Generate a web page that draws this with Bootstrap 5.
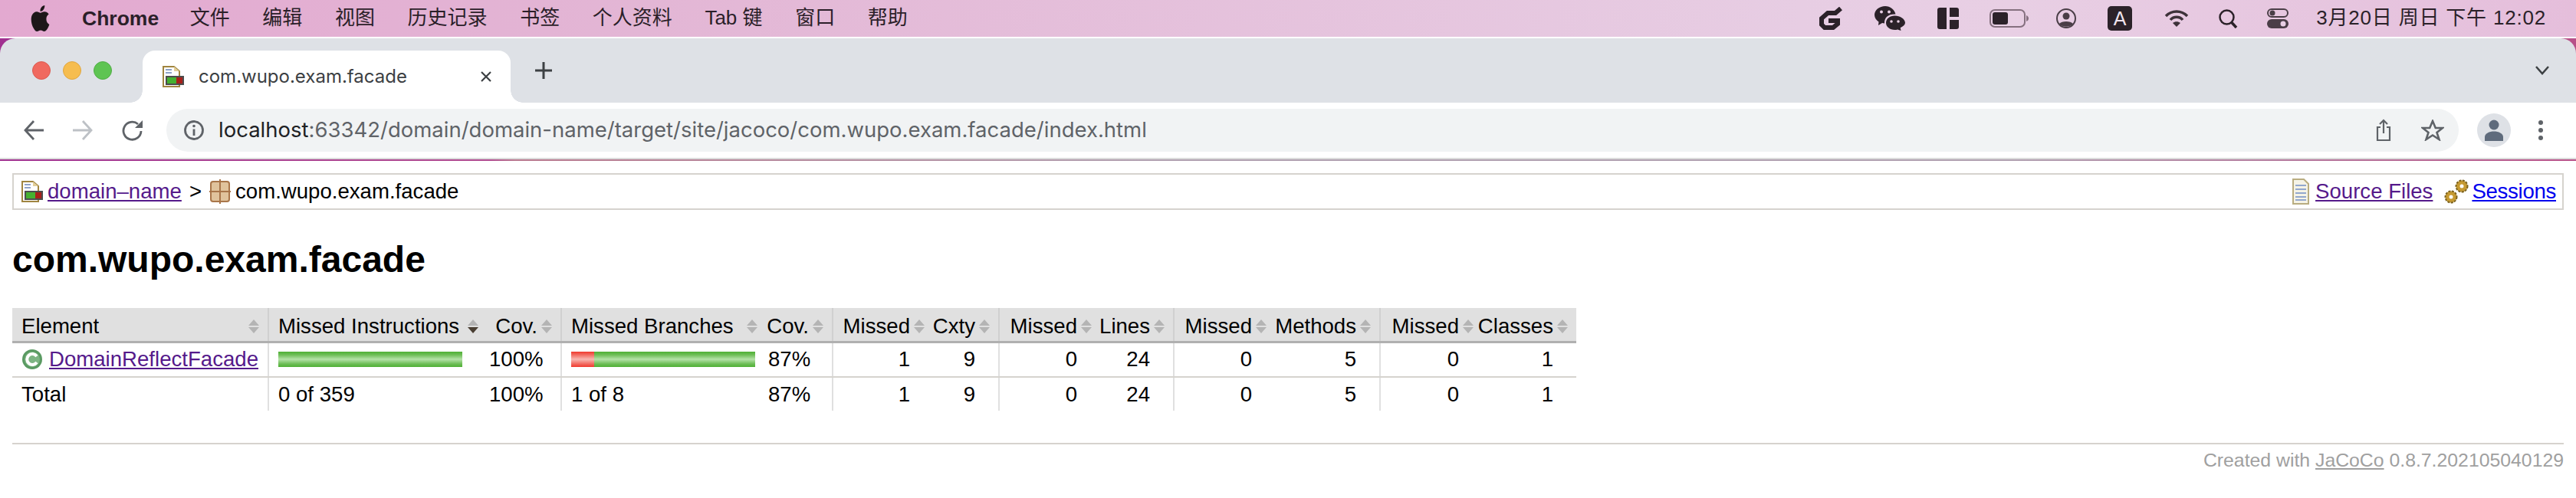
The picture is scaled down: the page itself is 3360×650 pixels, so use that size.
<!DOCTYPE html>
<html lang="en">
<head>
    <meta charset="UTF-8">
    <title>com.wupo.exam.facade</title>
    <link href="https://cdn.jsdelivr.net/npm/bootstrap@5.3.0/dist/css/bootstrap.min.css" rel="stylesheet">
    <style>
        html, body { height: 650px; overflow: hidden; }
        body { background: #fff; color: #000; font-family: "Liberation Sans", Arial, sans-serif; font-size: 27.6px; line-height: 1.15; }
        svg { display: block; flex: none; }

        .mac-bar { height: 48px; padding-left: 38px; padding-right: 39px; color: #2b1f29; font-family: "Liberation Sans", "Noto Sans CJK SC", sans-serif; font-size: 26px; background: linear-gradient(90deg, #e3a9d0 0%, #e3b6d5 25%, #e7cde3 70%, #e8cfe4 78%, #e5bedb 100%); }
        .mac-menu { gap: 42.6px; }
        .mac-menu b { font-size: 26.5px; margin-right: -2px; }
        .mac-apple { margin-right: -2.6px; }
        .mac-clock { letter-spacing: 0.8px; }
        .tray { color: #2b2229; }
        .g36 { margin-right: 36px; } .g38 { margin-right: 38px; } .g39 { margin-right: 39px; } .g40 { margin-right: 40px; } .g41 { margin-right: 41px; } .g42 { margin-right: 42px; }
        .wallpaper { height: 160px; background: linear-gradient(90deg, #a03090 0%, #b04a90 19%, #b8788e 20%, #b0a0b0 45%, #b0a0b0 78%, #b85088 100%); }
        .tabstrip { height: 84px; margin-top: 2px; padding-right: 35px; background: #dee1e6; border-radius: 20px 20px 0 0; }
        .lights { gap: 16px; padding-left: 42px; margin-right: 40px; }
        .light { width: 24px; height: 24px; border-radius: 50%; }
        .light-r { background: #f0695f; border: 1px solid #dc5a50; }
        .light-y { background: #f6bd4f; border: 1px solid #e0a640; }
        .light-g { background: #5ec452; border: 1px solid #50ad45; }
        .tab-head { position: relative; width: 480px; height: 68px; padding: 0 25px 0 26px; background: #fff; border-radius: 16px 16px 0 0; color: #3c4043; font-family: Inter, sans-serif; font-size: 24px; }
        .tab-head::before, .tab-head::after { content: ""; position: absolute; bottom: 0; width: 16px; height: 16px; }
        .tab-head::before { left: -16px; background: radial-gradient(circle at 0 0, #dee1e6 15.5px, #fff 16px); }
        .tab-head::after { right: -16px; background: radial-gradient(circle at 100% 0, #dee1e6 15.5px, #fff 16px); }
        .tab-title { margin-left: 19px; }
        .tab-plus { margin-left: 32px; }
        .toolbar { height: 74px; padding: 0 38px 0 31px; background: #fff; border-bottom: 2px solid #dcdcdc; }
        .tool-gap { margin-right: 38px; }
        .omnibox { height: 56px; width: 2990px; margin-left: -7px; margin-right: 24px; padding: 0 19px 0 23px; border-radius: 28px; background: #f1f3f4; color: #5f6368; font-family: Inter, sans-serif; font-size: 27.5px; }
        .omnibox em { font-style: normal; color: #202124; }
        .url-text { margin-left: 19px; }
        .star-ico { margin-left: 39px; }
        .avatar { width: 44px; height: 44px; border-radius: 50%; background: #dee1e6; margin-right: 36px; }

        .report { padding: 16px 16px 0; }
        .crumbs { height: 48px; padding: 0 8px 0 10px; border: 2px solid #d6d3ce; }
        .crumbs a { color: #551a8b; }
        .crumbs a.fresh { color: #0000ee; letter-spacing: -0.3px; }
        .crumb-link { margin-left: 6px; }
        .crumb-sep { margin: 0 10px; }
        .gear-ico { margin: 0 4px 0 15px; }
        .report-title { margin: 37px 0 0; font-family: "Liberation Sans", sans-serif; font-size: 48px; font-weight: 700; line-height: 55px; }
        .cov-table.table { width: 2040px; margin: 36px 0 0; table-layout: fixed; font-size: 27.6px; }
        .cov-table.table > thead > tr > th { height: 44px; padding: 0 10px 3px 12px; font-weight: 400; background: #e0e0e0; border-bottom: 3px solid #b0b0b0; color: #000; }
        .cov-table.table > thead > tr > th.tight { padding-right: 1px; }
        .cov-table.table > tbody > tr > td { height: 46px; padding: 0 30px 0 12px; vertical-align: middle; border-bottom: 2px solid #d6d3ce; text-align: right; color: #000; }
        .cov-table.table > tbody > tr > td.txt { padding-right: 0; text-align: left; }
        .cov-table.table > tbody > tr > td.tight { padding-right: 21px; }
        .cov-table.table > tbody:last-child > tr:last-child > td { border-bottom: 0; height: 44px; }
        .cov-table.table > thead > tr > .edge, .cov-table.table > tbody > tr > .edge { border-right: 2px solid #e0e0e0; }
        .cov-table.table > thead > tr > th.edge { border-right-color: #d0d0d0; }
        .cov-table a { color: #551a8b; }
        .sort-ico { color: #b4b4b4; margin-left: 4px; }
        .sort-on { color: #4a3f33; }
        .bar-green, .bar-red { height: 20px; }
        .bar-green { background: linear-gradient(180deg, #4fb035 0%, #6cbd55 20%, #b5e2a8 50%, #6cbd55 80%, #4fb035 100%); }
        .bar-red { background: linear-gradient(180deg, #f0392e 0%, #f26a60 20%, #f8b8b2 50%, #f26a60 80%, #f0392e 100%); }
        .report-foot { margin-top: 42px; border-top: 2px solid #d6d3ce; padding-top: 7px; color: #a0a0a0; font-size: 24.8px; text-align: right; }
        .report-foot a { color: #a0a0a0; }
    </style>
</head>
<body>
    <svg width="0" height="0" class="position-absolute">
        <defs>
            <symbol id="ico-report" viewBox="0 0 28 28">
                <path d="M1 1H15L22 7V27H1Z" fill="#fff" stroke="#a08540" stroke-width="2"/>
                <path d="M15 1V7H22Z" fill="#e3cf9a"/>
                <path d="M4 5H12M4 9H12" stroke="#8ea2c8" stroke-width="2"/>
                <rect x="4" y="13" width="24" height="12" fill="#4c4c4c"/>
                <rect x="6" y="15" width="12" height="8" fill="#45b030"/>
                <rect x="18" y="15" width="8" height="8" fill="#a8201a"/>
            </symbol>
        </defs>
    </svg>

    <div class="mac-bar d-flex align-items-center">
        <div class="mac-menu d-flex align-items-center">
            <svg class="mac-apple" width="29" height="34" viewBox="0 0 24 24" preserveAspectRatio="none" fill="#1d1719"><path d="M12.152 6.896c-.948 0-2.415-1.078-3.96-1.04-2.04.027-3.91 1.183-4.961 3.014-2.117 3.675-.546 9.103 1.519 12.09 1.013 1.454 2.208 3.09 3.792 3.039 1.52-.065 2.09-.987 3.935-.987 1.831 0 2.35.987 3.96.948 1.637-.026 2.676-1.48 3.676-2.948 1.156-1.688 1.636-3.325 1.662-3.415-.039-.013-3.182-1.221-3.22-4.857-.026-3.04 2.48-4.494 2.597-4.559-1.429-2.09-3.623-2.324-4.39-2.376-2-.156-3.675 1.09-4.61 1.09zM15.53 3.83c.843-1.012 1.4-2.427 1.245-3.83-1.207.052-2.662.805-3.532 1.818-.78.896-1.454 2.338-1.273 3.714 1.338.104 2.715-.688 3.559-1.701"/></svg>
            <b>Chrome</b>
            <span>文件</span>
            <span>编辑</span>
            <span>视图</span>
            <span>历史记录</span>
            <span>书签</span>
            <span>个人资料</span>
            <span>Tab 键</span>
            <span>窗口</span>
            <span>帮助</span>
        </div>
        <div class="tray d-flex align-items-center ms-auto">
            <svg class="g42" width="30" height="30" viewBox="0 0 30 30" fill="none" stroke="currentColor" stroke-width="6"><path d="M28 2L21 8H11L3 15V23L7 27H18L24 22V18H12"/></svg>
            <svg class="g42" width="40" height="32" viewBox="0 0 40 32" fill="currentColor"><path d="M14 0C6.500 0 0 5 0 11.500C0 15.500 2.500 18.500 5.500 20.500L5 25L10 22C11 22.300 12 22.500 13 22.500C12.500 15 18 10 27.500 10.500C26 4.500 20.500 0 14 0Z"/><path d="M26.500 12.500C20 12.500 15 16.700 15 21.800C15 27 20 31 26.500 31C28 31 29 30.800 30 30.400L34.500 32L33.700 28.300C37.500 26.500 40 24.300 40 21.800C40 16.700 33 12.500 26.500 12.500Z"/><circle cx="9" cy="7.500" r="2" fill="#e8cfe4"/><circle cx="19" cy="7.500" r="2" fill="#e8cfe4"/><circle cx="22" cy="20" r="1.800" fill="#e8cfe4"/><circle cx="31" cy="20" r="1.800" fill="#e8cfe4"/></svg>
            <svg class="g40" width="28" height="28" viewBox="0 0 28 28" fill="currentColor"><path d="M3 0H12V28H3A3 3 0 0 1 0 25V3A3 3 0 0 1 3 0Z"/><path d="M16 0H25A3 3 0 0 1 28 3V12H16Z"/><path d="M16 16H28V25A3 3 0 0 1 25 28H16Z"/></svg>
            <svg class="g36" width="51" height="24" viewBox="0 0 51 24"><rect x="1" y="1" width="45" height="22" rx="6" fill="none" stroke="#85707f" stroke-width="2"/><rect x="4" y="4" width="20" height="16" rx="3" fill="currentColor"/><path d="M48 8C50 9 51 10 51 12C51 14 50 15 48 16Z" fill="#85707f"/></svg>
            <svg class="g41" width="26" height="26" viewBox="0 0 26 26"><circle cx="13" cy="13" r="12" fill="none" stroke="#4a3e47" stroke-width="2"/><circle cx="13" cy="10" r="4.500" fill="#4a3e47"/><path d="M4 20C7 16 19 16 22 20C19 25 7 25 4 20Z" fill="#4a3e47"/></svg>
            <div class="g42 d-flex align-items-center justify-content-center">
                <svg width="32" height="32" viewBox="0 0 32 32"><rect width="32" height="32" rx="5" fill="currentColor"/><text x="16" y="25" text-anchor="middle" font-family="Liberation Sans" font-size="25" fill="#efe3ec">A</text></svg>
            </div>
            <svg class="g39" width="32" height="24" viewBox="0 0 32 24" fill="none" stroke="#3d3239" stroke-width="3.500"><path d="M2 9C10 1 22 1 30 9"/><path d="M8 14C12 9 20 9 24 14"/><path d="M11 18L16 23L21 18C18 15.500 14 15.500 11 18Z" fill="#3d3239" stroke="none"/></svg>
            <svg class="g38" width="25" height="25" viewBox="0 0 25 25" fill="none" stroke="currentColor"><circle cx="10.500" cy="10.500" r="9" stroke-width="2.500"/><path d="M16.500 17L23 24" stroke-width="3.500"/></svg>
            <svg class="g36" width="28" height="26" viewBox="0 0 28 26"><rect x="1" y="1" width="26" height="10" rx="5" fill="none" stroke="#4a3e47" stroke-width="2"/><circle cx="7" cy="6" r="3.500" fill="#4a3e47"/><rect y="14" width="28" height="12" rx="6" fill="#4a3e47"/><circle cx="21" cy="20" r="3.500" fill="#e8cfe4"/></svg>
            <span class="mac-clock">3月20日 周日 下午 12:02</span>
        </div>
    </div>

    <div class="wallpaper">
        <div class="tabstrip d-flex align-items-end">
            <div class="lights d-flex align-self-center">
                <div class="light light-r"></div>
                <div class="light light-y"></div>
                <div class="light light-g"></div>
            </div>
            <div class="tab-head d-flex align-items-center">
                <svg width="28" height="28"><use href="#ico-report"/></svg>
                <span class="tab-title">com.wupo.exam.facade</span>
                <svg class="ms-auto" width="14" height="14" viewBox="0 0 14 14" stroke="#3c4043" stroke-width="2.200"><path d="M1 1L13 13M13 1L1 13"/></svg>
            </div>
            <svg class="tab-plus align-self-center" width="22" height="22" viewBox="0 0 22 22" stroke="#3c4043" stroke-width="3"><path d="M11 0V22M0 11H22"/></svg>
            <svg class="ms-auto align-self-center" width="18" height="12" viewBox="0 0 18 12" fill="none" stroke="#3c4043" stroke-width="2.500"><path d="M1 1L9 10L17 1"/></svg>
        </div>
        <div class="toolbar d-flex align-items-center">
            <svg class="tool-gap" width="26" height="26" viewBox="0 0 26 26" fill="none" stroke="#5f6368" stroke-width="2.800"><path d="M26 13H2M13 1L2 13L13 25"/></svg>
            <svg class="tool-gap" width="26" height="26" viewBox="0 0 26 26" fill="none" stroke="#bdc1c6" stroke-width="2.800"><path d="M0 13H24M13 1L24 13L13 25"/></svg>
            <svg class="tool-gap" width="27" height="27" viewBox="0 0 27 27" fill="none" stroke="#5f6368" stroke-width="2.800"><path d="M25 14A11.500 11.500 0 1 1 21 5"/><path d="M27 0V10H17Z" fill="#5f6368" stroke="none"/></svg>
            <div class="omnibox d-flex align-items-center">
                <svg width="26" height="26" viewBox="0 0 26 26" fill="none" stroke="#5f6368"><circle cx="13" cy="13" r="11.500" stroke-width="2.800"/><path d="M13 11.500V20" stroke-width="2.800"/><circle cx="13" cy="7.500" r="1.800" fill="#5f6368" stroke="none"/></svg>
                <span class="url-text"><em>localhost</em>:63342/domain/domain-name/target/site/jacoco/com.wupo.exam.facade/index.html</span>
                <svg class="ms-auto" width="20" height="30" viewBox="0 0 20 30" fill="none" stroke="#5f6368" stroke-width="2.200"><path d="M6 11H2V28H18V11H14"/><path d="M10 19V2M5 7L10 2L15 7"/></svg>
                <svg class="star-ico" width="30" height="28" viewBox="0 0 30 28" fill="none" stroke="#5f6368" stroke-width="2.600"><path d="M15 2L18.800 11H28L20.500 17L23.500 26L15 20.500L6.500 26L9.500 17L2 11H11.200Z"/></svg>
            </div>
            <div class="avatar d-flex align-items-center justify-content-center">
                <svg width="24" height="28" viewBox="0 0 24 28" fill="#5f6b7c"><circle cx="12" cy="7" r="6.500"/><path d="M0 28V23C0 18 6 15.500 12 15.500C18 15.500 24 18 24 23V28Z"/></svg>
            </div>
            <svg width="6" height="26" viewBox="0 0 6 26" fill="#5f6368"><circle cx="3" cy="3" r="3"/><circle cx="3" cy="13" r="3"/><circle cx="3" cy="23" r="3"/></svg>
        </div>
    </div>

    <div class="report">
        <div class="crumbs d-flex align-items-center">
            <svg width="28" height="28"><use href="#ico-report"/></svg>
            <a href="#" class="crumb-link">domain–name</a>
            <span class="crumb-sep">&gt;</span>
            <svg width="28" height="32" viewBox="0 0 28 32" fill="#e0c39c" stroke="#a9764a" stroke-width="2"><rect x="2" y="3" width="24" height="26" rx="3"/><path d="M14 0V32M0 16H28" fill="none"/></svg>
            <span class="crumb-link">com.wupo.exam.facade</span>
            <svg class="ms-auto" width="22" height="34" viewBox="0 0 22 34"><path d="M1 1H15L21 7V33H1Z" fill="#f5f3e6" stroke="#b9ad80" stroke-width="2"/><path d="M4 9H18M4 14H18M4 19H18M4 24H18M4 28H18" stroke="#92a7cd" stroke-width="2"/></svg>
            <a href="#" class="ms-2">Source Files</a>
            <svg class="gear-ico" width="32" height="34" viewBox="0 0 32 34" fill="#c69a32" stroke="#7b6220" stroke-width="2" stroke-dasharray="3 1.500"><circle cx="9" cy="24" r="7.500"/><circle cx="23" cy="10" r="7.500"/><circle cx="9" cy="24" r="2.500" fill="#fff" stroke="none"/><circle cx="23" cy="10" r="2.500" fill="#fff" stroke="none"/></svg>
            <a href="#" class="fresh">Sessions</a>
        </div>

        <h1 class="report-title">com.wupo.exam.facade</h1>

        <table class="table cov-table">
            <colgroup>
                <col style="width:334px"><col style="width:276px"><col style="width:106px"><col style="width:258px"><col style="width:96px"><col style="width:122px"><col style="width:95px"><col style="width:123px"><col style="width:105px"><col style="width:123px"><col style="width:146px"><col style="width:124px"><col style="width:132px">
            </colgroup>
            <thead>
                <tr id="head-row"></tr>
            </thead>
            <tbody>
                <tr>
                    <td class="txt edge">
                        <div class="d-flex align-items-center">
                            <svg width="28" height="28" viewBox="0 0 28 28" class="me-2"><circle cx="14" cy="14" r="13" fill="#5a9a62"/><circle cx="14" cy="14" r="10" fill="#7cb482"/><path d="M20 10A7 7 0 1 0 20 18" fill="none" stroke="#fff" stroke-width="4"/></svg>
                            <a href="#">DomainReflectFacade</a>
                        </div>
                    </td>
                    <td class="txt"><div class="d-flex"><div class="bar-green" style="width:240px"></div></div></td>
                    <td class="edge">100%</td>
                    <td class="txt"><div class="d-flex"><div class="bar-red" style="width:30px"></div><div class="bar-green" style="width:210px"></div></div></td>
                    <td class="edge">87%</td>
                    <td class="tight">1</td><td class="edge">9</td>
                    <td class="tight">0</td><td class="edge">24</td>
                    <td class="tight">0</td><td class="edge">5</td>
                    <td class="tight">0</td><td>1</td>
                </tr>
                <tr>
                    <td class="txt edge">Total</td>
                    <td class="txt">0 of 359</td>
                    <td class="edge">100%</td>
                    <td class="txt">1 of 8</td>
                    <td class="edge">87%</td>
                    <td class="tight">1</td><td class="edge">9</td>
                    <td class="tight">0</td><td class="edge">24</td>
                    <td class="tight">0</td><td class="edge">5</td>
                    <td class="tight">0</td><td>1</td>
                </tr>
            </tbody>
        </table>

        <div class="report-foot">Created with <a href="#">JaCoCo</a> 0.8.7.202105040129</div>
    </div>

    <script>
        // header cells, same layout for every column
        const heads = [
            ['Element', 'between edge'], ['Missed Instructions', 'between tight', 'on'], ['Cov.', 'edge'],
            ['Missed Branches', 'between tight'], ['Cov.', 'edge'],
            ['Missed', 'tight'], ['Cxty', 'edge'], ['Missed', 'tight'], ['Lines', 'edge'],
            ['Missed', 'tight'], ['Methods', 'edge'], ['Missed', 'tight'], ['Classes', '']
        ];
        document.getElementById('head-row').innerHTML = heads.map(function (h) {
            const between = h[1].includes('between');
            const cls = h[1].replace('between', '').trim();
            const down = h[2] === 'on' ? ' class="sort-on"' : '';
            return '<th class="' + cls + '"><div class="d-flex align-items-center ' +
                (between ? 'justify-content-between' : 'justify-content-end') + '">' +
                '<span class="text-nowrap">' + h[0] + '</span>' +
                '<svg class="sort-ico" width="16" height="20" viewBox="0 0 16 20"><path d="M8 1L15 9H1Z" fill="currentColor"/><path' + down + ' d="M1 11H15L8 19Z" fill="currentColor"/></svg>' +
                '</div></th>';
        }).join('');
    </script>
</body>
</html>
